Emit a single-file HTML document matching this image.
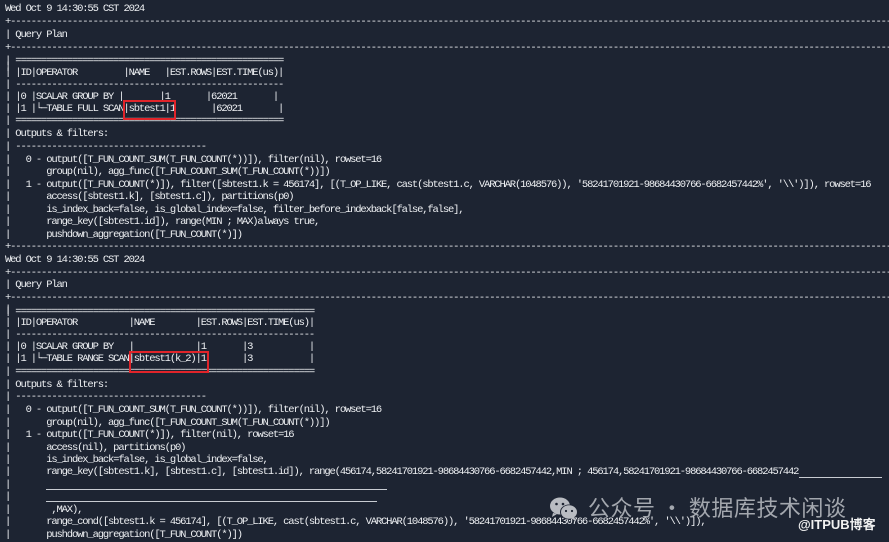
<!DOCTYPE html>
<html><head><meta charset="utf-8"><style>
html,body{margin:0;padding:0;}
body{width:889px;height:541px;background:#1d2432;overflow:hidden;position:relative;}
.w{position:absolute;left:0;top:1px;width:889px;height:541px;}
.l{position:absolute;left:5px;height:12px;line-height:12px;font-family:"Liberation Mono",monospace;font-size:10.5px;letter-spacing:-1.15px;color:#eef0f3;white-space:pre;}
.rb{position:absolute;border:2px solid #e0242a;}
.u{position:absolute;border-top:1px solid #c8ccd2;height:0;}
</style></head><body><div class="w">
<div class="l" style="top:2px">Wed Oct 9 14:30:55 CST 2024</div>
<div class="l" style="top:15px">+---------------------------------------------------------------------------------------------------------------------------------------------------------------------------------</div>
<div class="l" style="top:28px">| Query Plan</div>
<div class="l" style="top:41px">+---------------------------------------------------------------------------------------------------------------------------------------------------------------------------------</div>
<div class="l" style="top:54px">| ====================================================</div>
<div class="l" style="top:60px">|</div>
<div class="l" style="top:66px">| |ID|OPERATOR         |NAME   |EST.ROWS|EST.TIME(us)|</div>
<div class="l" style="top:78px">| ----------------------------------------------------</div>
<div class="l" style="top:90px">| |0 |SCALAR GROUP BY |       |1       |62021       |</div>
<div class="l" style="top:102px">| |1 |└─TABLE FULL SCAN|sbtest1|1       |62021       |</div>
<div class="l" style="top:114px">| ====================================================</div>
<div class="l" style="top:127px">| Outputs &amp; filters:</div>
<div class="l" style="top:140px">| -------------------------------------</div>
<div class="l" style="top:153px">|   0 - output([T_FUN_COUNT_SUM(T_FUN_COUNT(*))]), filter(nil), rowset=16</div>
<div class="l" style="top:165px">|       group(nil), agg_func([T_FUN_COUNT_SUM(T_FUN_COUNT(*))])</div>
<div class="l" style="top:178px">|   1 - output([T_FUN_COUNT(*)]), filter([sbtest1.k = 456174], [(T_OP_LIKE, cast(sbtest1.c, VARCHAR(1048576)), '58241701921-98684430766-6682457442%', '\\')]), rowset=16</div>
<div class="l" style="top:190px">|       access([sbtest1.k], [sbtest1.c]), partitions(p0)</div>
<div class="l" style="top:203px">|       is_index_back=false, is_global_index=false, filter_before_indexback[false,false],</div>
<div class="l" style="top:215px">|       range_key([sbtest1.id]), range(MIN ; MAX)always true,</div>
<div class="l" style="top:228px">|       pushdown_aggregation([T_FUN_COUNT(*)])</div>
<div class="l" style="top:240px">+---------------------------------------------------------------------------------------------------------------------------------------------------------------------------------</div>
<div class="rb" style="left:123px;top:99px;width:49px;height:16px"></div>

<div class="l" style="top:253px">Wed Oct 9 14:30:55 CST 2024</div>
<div class="l" style="top:266px">+---------------------------------------------------------------------------------------------------------------------------------------------------------------------------------</div>
<div class="l" style="top:278px">| Query Plan</div>
<div class="l" style="top:291px">+---------------------------------------------------------------------------------------------------------------------------------------------------------------------------------</div>
<div class="l" style="top:303px">|</div>
<div class="l" style="top:305px">| ==========================================================</div>
<div class="l" style="top:316px">| |ID|OPERATOR          |NAME        |EST.ROWS|EST.TIME(us)|</div>
<div class="l" style="top:328px">| ----------------------------------------------------------</div>
<div class="l" style="top:340px">| |0 |SCALAR GROUP BY   |            |1       |3           |</div>
<div class="l" style="top:352px">| |1 |└─TABLE RANGE SCAN|sbtest1(k_2)|1       |3           |</div>
<div class="l" style="top:365px">| ==========================================================</div>
<div class="l" style="top:378px">| Outputs &amp; filters:</div>
<div class="l" style="top:390px">| -------------------------------------</div>
<div class="l" style="top:403px">|   0 - output([T_FUN_COUNT_SUM(T_FUN_COUNT(*))]), filter(nil), rowset=16</div>
<div class="l" style="top:416px">|       group(nil), agg_func([T_FUN_COUNT_SUM(T_FUN_COUNT(*))])</div>
<div class="l" style="top:428px">|   1 - output([T_FUN_COUNT(*)]), filter(nil), rowset=16</div>
<div class="l" style="top:441px">|       access(nil), partitions(p0)</div>
<div class="l" style="top:453px">|       is_index_back=false, is_global_index=false,</div>
<div class="l" style="top:465px">|       range_key([sbtest1.k], [sbtest1.c], [sbtest1.id]), range(456174,58241701921-98684430766-6682457442,MIN ; 456174,58241701921-98684430766-6682457442</div>
<div class="l" style="top:478px">|</div>
<div class="l" style="top:490px">|</div>
<div class="l" style="top:503px">|        ,MAX),</div>
<div class="l" style="top:515px">|       range_cond([sbtest1.k = 456174], [(T_OP_LIKE, cast(sbtest1.c, VARCHAR(1048576)), '58241701921-98684430766-6682457442%', '\\')]),</div>
<div class="l" style="top:528px">|       pushdown_aggregation([T_FUN_COUNT(*)])</div>
<div class="u" style="left:799px;top:476px;width:83px"></div>
<div class="u" style="left:46px;top:488px;width:341px"></div>
<div class="u" style="left:46px;top:500px;width:331px"></div>
<div class="rb" style="left:129px;top:350px;width:76px;height:18px"></div>

<svg style="position:absolute;left:548px;top:495px" width="34" height="26" viewBox="0 0 34 26">
<ellipse cx="12" cy="10" rx="10" ry="8.5" fill="#b9bcc2"/>
<path d="M5 17 L4 21 L9 18 Z" fill="#b9bcc2"/>
<ellipse cx="21" cy="16" rx="9" ry="7.5" fill="#1d2432"/>
<ellipse cx="21" cy="16" rx="8" ry="6.8" fill="#b9bcc2"/>
<path d="M26 21 L28 25 L22 22 Z" fill="#b9bcc2"/>
<circle cx="8.5" cy="8" r="1.3" fill="#1d2432"/><circle cx="15" cy="8" r="1.3" fill="#1d2432"/>
<circle cx="18" cy="15" r="1.1" fill="#1d2432"/><circle cx="24" cy="15" r="1.1" fill="#1d2432"/>
</svg>
<div style="position:absolute;left:588px;top:493px;font-family:'Noto Sans CJK SC',sans-serif;font-size:22px;line-height:26px;color:#a3a7ae;white-space:nowrap;letter-spacing:0.5px">公众号 · 数据库技术闲谈</div>
<div style="position:absolute;left:798px;top:515px;font-family:'Liberation Sans','Noto Sans CJK SC',sans-serif;font-size:13px;font-weight:bold;line-height:18px;color:#f2f2f2;white-space:nowrap">@ITPUB博客</div>
</div></body></html>
